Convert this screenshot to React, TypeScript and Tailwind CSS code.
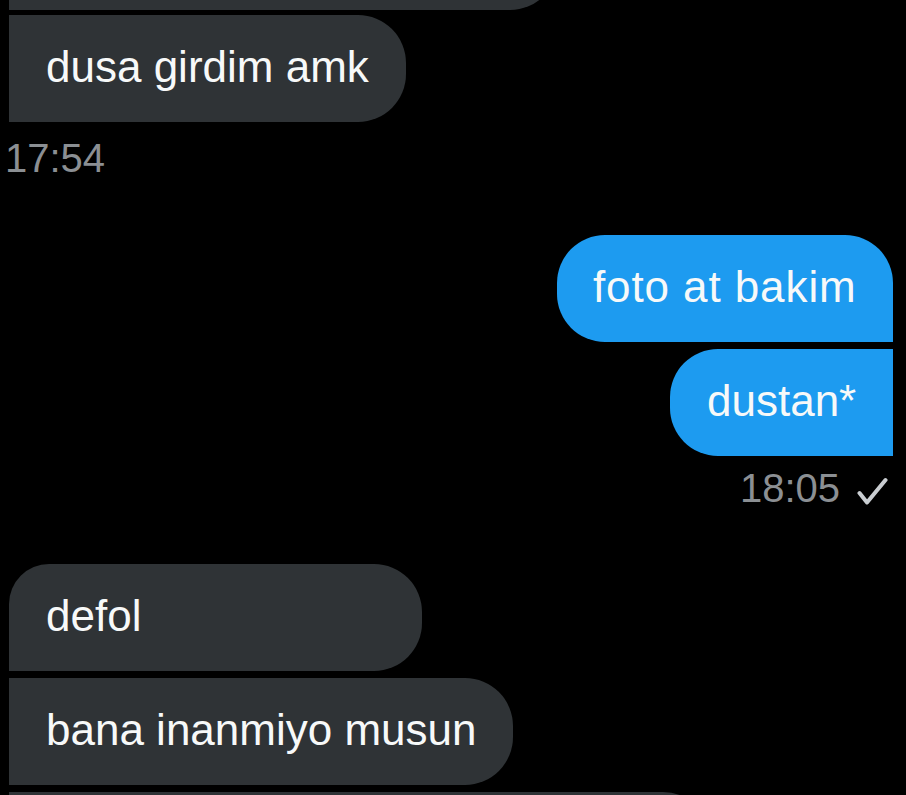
import React from "react";

const font = { fontFamily: '"Liberation Sans", Arial, sans-serif' };

export default function App() {
  return (
    <div
      className="w-full h-[795px] bg-black overflow-hidden flex flex-col pl-[9px] pr-[13px]"
      style={font}
    >
      {/* previous bubble (cut off at top) */}
      <div className="-mt-[97px] h-[107px] w-[549px] shrink-0 bg-[#2f3336] rounded-r-[48px]" />

      {/* dusa girdim amk */}
      <div className="mt-[5px] self-start shrink-0 h-[107px] bg-[#2f3336] rounded-r-[48px] px-[37px] pt-[26px] pb-[29px] text-[44px] leading-[52px] text-[#f7f9f9] whitespace-nowrap">
        dusa girdim amk
      </div>

      {/* 17:54 */}
      <div className="mt-[12px] -ml-[4px] self-start shrink-0 text-[40px] leading-[48px] text-[#8b8f93]">
        17:54
      </div>

      {/* sent bubbles */}
      <div className="mt-[53px] self-end shrink-0 w-[336px] h-[107px] bg-[#1d9bf0] rounded-tl-[48px] rounded-tr-[48px] rounded-bl-[48px] rounded-br-none pl-[36px] pt-[26px] pb-[29px] text-[44px] leading-[52px] tracking-[0.9px] text-[#f7f9f9] whitespace-nowrap">
        foto at bakim
      </div>
      <div className="mt-[7px] self-end shrink-0 w-[223px] h-[107px] bg-[#1d9bf0] rounded-l-[48px] rounded-r-none pl-[37px] pt-[26px] pb-[29px] text-[44px] leading-[52px] text-[#f7f9f9] whitespace-nowrap">
        dustan*
      </div>

      {/* 18:05 + check */}
      <div className="mt-[8px] self-end shrink-0 flex items-center gap-[17px] pr-[5px]">
        <span className="text-[40px] leading-[48px] text-[#8b8f93]">18:05</span>
        <svg width="31" height="30" viewBox="0 0 31 30" className="mt-[8px]">
          <polyline
            points="2.5,16 10,25.5 28.5,3"
            fill="none"
            stroke="#c9cdd1"
            strokeWidth="4"
            strokeLinecap="round"
            strokeLinejoin="round"
          />
        </svg>
      </div>

      {/* received */}
      <div className="mt-[52px] self-start shrink-0 w-[413px] h-[107px] bg-[#2f3336] rounded-tl-[40px] rounded-r-[48px] pl-[37px] pt-[26px] pb-[29px] text-[44px] leading-[52px] text-[#f7f9f9] whitespace-nowrap">
        defol
      </div>
      <div className="mt-[7px] self-start shrink-0 h-[107px] bg-[#2f3336] rounded-r-[48px] px-[37px] pt-[26px] pb-[29px] text-[44px] leading-[52px] text-[#f7f9f9] whitespace-nowrap">
        bana inanmiyo musun
      </div>
      <div className="mt-[7px] self-start shrink-0 w-[702px] h-[107px] bg-[#2f3336] rounded-r-[48px]" />
    </div>
  );
}
